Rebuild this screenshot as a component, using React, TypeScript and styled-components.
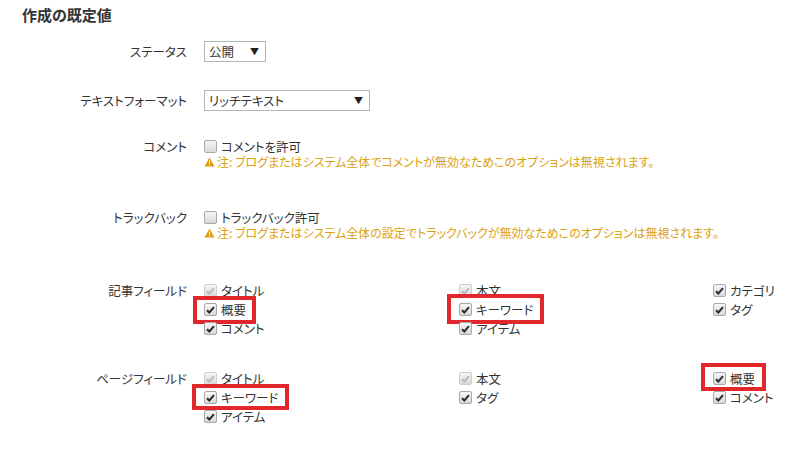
import React from "react";
import styled, { createGlobalStyle } from "styled-components";

const Global = createGlobalStyle`
  html, body { margin: 0; padding: 0; background: #fff; }
  body {
    font-family: "Noto Sans CJK JP", "Liberation Sans", sans-serif;
    font-feature-settings: "palt";
    color: #333;
    font-size: 12.5px;
  }
`;

const Page = styled.div`
  width: 807px;
  height: 455px;
  overflow: hidden;
`;

const Title = styled.h2`
  margin: 0;
  padding: 5px 0 0 22px;
  height: 25px;
  font-size: 15px;
  line-height: 20px;
  font-weight: bold;
  color: #333;
`;

const Row = styled.div<{ $top: number }>`
  display: grid;
  grid-template-columns: 187px 1fr;
  column-gap: 17px;
  margin-top: ${(p) => p.$top}px;
`;

const Label = styled.div<{ $lh: number }>`
  text-align: right;
  line-height: ${(p) => p.$lh}px;
  white-space: nowrap;
`;

const Value = styled.div`
  display: flex;
  flex-direction: column;
`;

const Select = styled.div<{ $w: number }>`
  width: ${(p) => p.$w}px;
  height: 21px;
  box-sizing: border-box;
  border: 1px solid #b5b5b5;
  background: #fff;
  display: flex;
  align-items: center;
  justify-content: space-between;
  padding: 0 6px 0 4px;
  font-size: 12.5px;
`;

const Arrow = styled.span`
  font-size: 9px;
  color: #222;
`;

const CheckLine = styled.label<{ $h?: number }>`
  display: flex;
  align-items: center;
  gap: 4px;
  height: ${(p) => p.$h ?? 19}px;
  line-height: ${(p) => p.$h ?? 19}px;
  white-space: nowrap;
  position: relative;
`;

const Box = styled.span<{ $disabled?: boolean }>`
  width: 13px;
  height: 13px;
  box-sizing: border-box;
  border: 1px solid ${(p) => (p.$disabled ? "#cfcfcf" : "#a8a8a8")};
  border-radius: 2px;
  background: linear-gradient(#f6f6f6, #d9d9d9);
  display: inline-flex;
  align-items: center;
  justify-content: center;
  flex: none;
`;

const Highlight = styled.span<{ $t: number; $b: number; $l: number; $r: number }>`
  position: absolute;
  top: ${(p) => p.$t}px;
  bottom: ${(p) => p.$b}px;
  left: ${(p) => p.$l}px;
  right: ${(p) => p.$r}px;
  border: 4px solid #e1262c;
  pointer-events: none;
`;

const Warning = styled.div<{ $h: number }>`
  display: flex;
  align-items: center;
  gap: 2px;
  height: ${(p) => p.$h}px;
  line-height: ${(p) => p.$h}px;
  color: #dca10c;
  font-size: 12px;
  white-space: nowrap;
`;

const Columns = styled.div`
  display: grid;
  grid-template-columns: 255px 254px 1fr;
`;

const Col = styled.div`
  display: flex;
  flex-direction: column;
  align-items: flex-start;
`;

const Check = ({ disabled, checked = true }: { disabled?: boolean; checked?: boolean }) => (
  <Box $disabled={disabled}>
    {checked && (
      <svg width="9" height="8" viewBox="0 0 9 8">
        <path
          d="M1 4.2 L3.3 6.5 L8 1.2"
          fill="none"
          stroke={disabled ? "#b9b9b9" : "#2a2a2a"}
          strokeWidth="2"
        />
      </svg>
    )}
  </Box>
);

const WarnIcon = () => (
  <svg width="11" height="10" viewBox="0 0 11 10">
    <path d="M5.5 0.5 L10.5 9.5 L0.5 9.5 Z" fill="#e39a12" />
    <rect x="5" y="3.3" width="1" height="3.5" fill="#fff" />
    <rect x="5" y="7.6" width="1" height="1" fill="#fff" />
  </svg>
);

type Item = {
  text: string;
  disabled?: boolean;
  hl?: [number, number, number, number];
};

const Field = ({ item }: { item: Item }) => (
  <CheckLine>
    <Check disabled={item.disabled} />
    <span>{item.text}</span>
    {item.hl && <Highlight $t={item.hl[0]} $b={item.hl[1]} $l={item.hl[2]} $r={item.hl[3]} />}
  </CheckLine>
);

const FieldGrid = ({ cols }: { cols: Item[][] }) => (
  <Columns>
    {cols.map((c, i) => (
      <Col key={i}>
        {c.map((it) => (
          <Field key={it.text} item={it} />
        ))}
      </Col>
    ))}
  </Columns>
);

const entryCols: Item[][] = [
  [
    { text: "タイトル", disabled: true },
    { text: "概要", hl: [-4, -5, -11, -10] },
    { text: "コメント" },
  ],
  [
    { text: "本文", disabled: true },
    { text: "キーワード", hl: [-6, -5, -12, -11] },
    { text: "アイテム" },
  ],
  [{ text: "カテゴリ" }, { text: "タグ" }],
];

const pageCols: Item[][] = [
  [
    { text: "タイトル", disabled: true },
    { text: "キーワード", hl: [-4, -3, -12, -11] },
    { text: "アイテム" },
  ],
  [{ text: "本文", disabled: true }, { text: "タグ" }],
  [{ text: "概要", hl: [-6, -3, -12, -11] }, { text: "コメント" }],
];

export default function App() {
  return (
    <Page>
      <Global />
      <Title>作成の既定値</Title>
      <Row $top={11}>
        <Label $lh={21}>ステータス</Label>
        <Value>
          <Select $w={62}>
            <span>公開</span>
            <Arrow>▼</Arrow>
          </Select>
        </Value>
      </Row>
      <Row $top={28}>
        <Label $lh={21}>テキストフォーマット</Label>
        <Value>
          <Select $w={166}>
            <span>リッチテキスト</span>
            <Arrow>▼</Arrow>
          </Select>
        </Value>
      </Row>
      <Row $top={27}>
        <Label $lh={17}>コメント</Label>
        <Value>
          <CheckLine $h={17}>
            <Check checked={false} />
            <span>コメントを許可</span>
          </CheckLine>
          <Warning $h={13}>
            <WarnIcon />
            <span>注: ブログまたはシステム全体でコメントが無効なためこのオプションは無視されます。</span>
          </Warning>
        </Value>
      </Row>
      <Row $top={41}>
        <Label $lh={17}>トラックバック</Label>
        <Value>
          <CheckLine $h={17}>
            <Check checked={false} />
            <span>トラックバック許可</span>
          </CheckLine>
          <Warning $h={14}>
            <WarnIcon />
            <span>注: ブログまたはシステム全体の設定でトラックバックが無効なためこのオプションは無視されます。</span>
          </Warning>
        </Value>
      </Row>
      <Row $top={41}>
        <Label $lh={19}>記事フィールド</Label>
        <FieldGrid cols={entryCols} />
      </Row>
      <Row $top={31}>
        <Label $lh={19}>ページフィールド</Label>
        <FieldGrid cols={pageCols} />
      </Row>
    </Page>
  );
}
